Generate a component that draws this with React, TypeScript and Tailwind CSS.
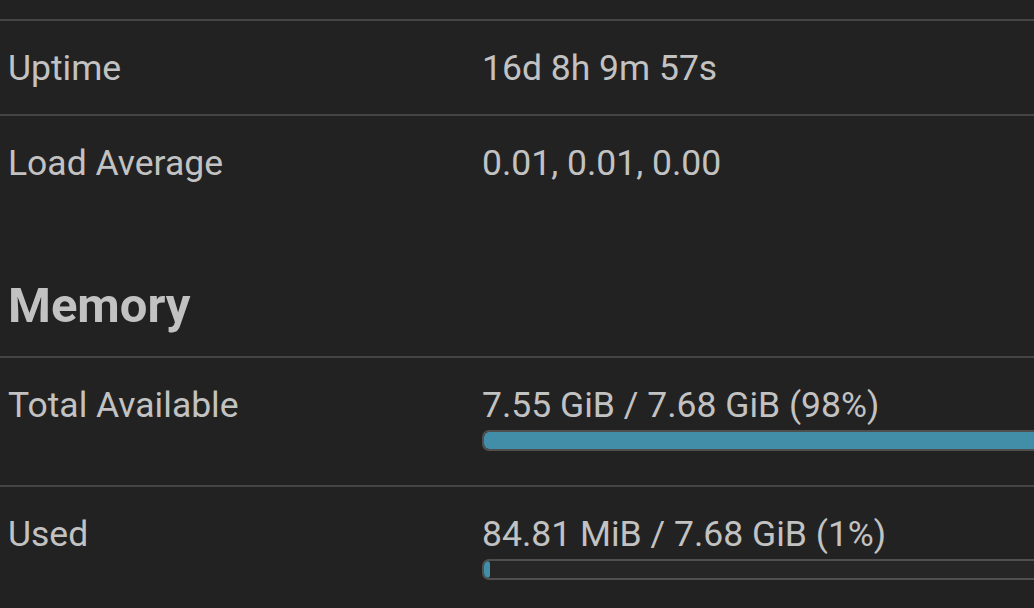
import React from "react";

type Row = { label: string; value: string; percent?: number };

const system: Row[] = [
  { label: "Uptime", value: "16d 8h 9m 57s" },
  { label: "Load Average", value: "0.01, 0.01, 0.00" },
];

const memory: Row[] = [
  { label: "Total Available", value: "7.55 GiB / 7.68 GiB (98%)", percent: 98 },
  { label: "Used", value: "84.81 MiB / 7.68 GiB (1%)", percent: 1 },
];

function Bar({ percent }: { percent: number }) {
  return (
    <div className="-mt-[2px] mb-[15px] h-[21px] w-full overflow-hidden rounded-[7px] border-2 border-[#4f4f4f] bg-[#262626]">
      <div className="h-full rounded-[5px] bg-[#428ea8]" style={{ width: `${Math.max(percent, 0.6)}%` }} />
    </div>
  );
}

function InfoRow({ row, first }: { row: Row; first?: boolean }) {
  return (
    <div className={`grid grid-cols-[474px_1fr] border-[#454545] ${first ? "" : "border-t-2"}`}>
      <div className="py-[19.5px] pl-[8px]">{row.label}</div>
      <div className="py-[19.5px] pl-[8px]">
        <div>{row.value}</div>
        {row.percent !== undefined && <Bar percent={row.percent} />}
      </div>
    </div>
  );
}

export default function App() {
  return (
    <div className="h-[608px] w-full overflow-hidden bg-[#222222] text-[#c2c2c2] font-['Roboto',sans-serif] text-[35.5px] leading-[54px]">
      <div className="w-[1060px]">
        <div className="h-[19px]" />
        <div className="border-t-2 border-[#454545]">
          {system.map((r, i) => (
            <InfoRow key={r.label} row={r} first={i === 0} />
          ))}
        </div>

        <h2 className="mt-[67px] mb-[20px] pl-[8px] text-[49px] font-bold leading-[60px]">Memory</h2>

        <div className="border-t-2 border-[#454545]">
          {memory.map((r, i) => (
            <InfoRow key={r.label} row={r} first={i === 0} />
          ))}
        </div>
      </div>
    </div>
  );
}
